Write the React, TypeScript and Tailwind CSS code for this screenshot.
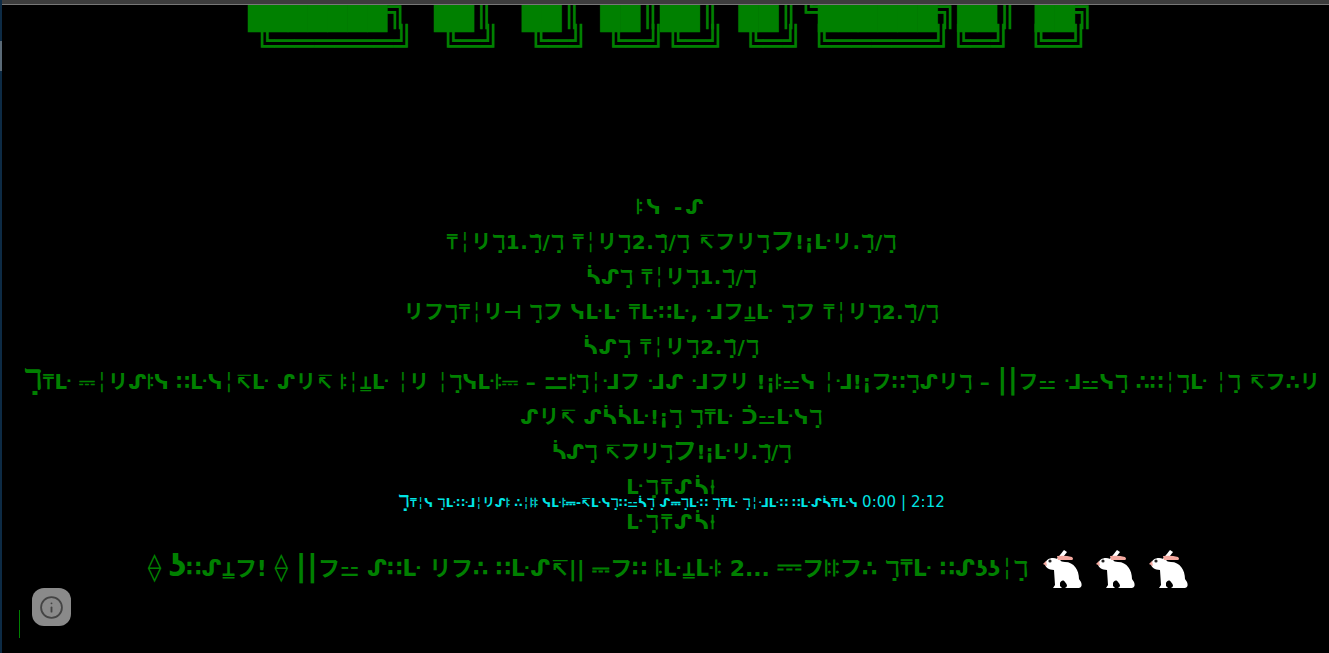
import { Info } from "lucide-react";
import type { ReactNode } from "react";

const font = { fontFamily: '"DejaVu Sans","Noto Sans CJK JP",monospace' };

function Rabbit() {
  return (
    <svg width="40" height="40" viewBox="0 0 40 40" className="shrink-0">
      <path d="M13 11 L21 1 L24 3 L17 12 Z" fill="#fff" />
      <path d="M10 9 C16 9 17 13 22 13 C31 13 36 21 36 30 L38 33 Q40 38 36 39 L22 39 Q26 37 22 33 C20 30 18 32 17 34 L17 37 L19 39 L10 39 L12 36 L11 21 C6 21 2 18 2 15 C3 11 6 9 10 9 Z" fill="#fff" />
      <path d="M14 7 Q22 6 29 8 Q31 10 29 11 Q20 11 15 11 Z" fill="#f4a9a0" />
      <path d="M0 15 L3 12 L4 17 Z" fill="#f4a9a0" />
      <circle cx="7" cy="12" r="1.6" fill="#222" />
    </svg>
  );
}

const C = ({ children }: { children: ReactNode }) => <span className="text-[1.4em] leading-none">{children}</span>;
const O = () => <span className="text-[1.2em] leading-none">フ</span>;
const B = ({ children }: { children: ReactNode }) => <span className="align-[-3px]">{children}</span>;
const D = () => <span className="text-[1.25em] leading-none">⟠</span>;

const txt = ".ℸ̣̇/ℸ̣";

const lines: { t: ReactNode; c: string }[] = [
  { t: "ꖎᓭ -ᔑ", c: "tracking-[3px]" },
  { t: <>⍑╎リℸ̣1{txt} ⍑╎リℸ̣2{txt} ↸フリℸ̣<O />!¡ᒷリ{txt}</>, c: "tracking-[0.5px]" },
  { t: <>ᓵᔑℸ̣ ⍑╎リℸ̣1{txt}</>, c: "tracking-[0.25px]" },
  { t: <>リフℸ̣⍑╎リ⊣ ℸ̣フ ᓭᒷᒷ ⍑ᒷ∷ᒷ, ᒲフ⍊ᒷ ℸ̣フ ⍑╎リℸ̣2{txt}</>, c: "tracking-[0.3px]" },
  { t: <>ᓵᔑℸ̣ ⍑╎リℸ̣2{txt}</>, c: "tracking-[0.7px]" },
  { t: <><C>ℸ̣</C>⍑ᒷ ⎓╎リᔑꖎᓭ ∷ᒷᓭ╎↸ᒷ ᔑリ↸ ꖎ╎⍊ᒷ ╎リ ╎ℸ̣ᓭᒷꖎ⎓ – <C>⚍</C>ꖎℸ̣╎ᒲフ ᒲᔑ ᒲフリ !¡ꖎ⚍ᓭ ╎ᒲ!¡フ∷ℸ̣ᔑリℸ̣ – <C>||</C>フ⚍ ᒲ⚍ᓭℸ̣ ∴∷╎ℸ̣ᒷ ╎ℸ̣ ↸フ∴リ</>, c: "tracking-[0.23px]" },
  { t: <>ᔑリ↸ ᔑᓵᓵᒷ<span>!¡</span><span>ℸ̣</span> ℸ̣⍑ᒷ ᑑ⚍ᒷᓭℸ̣</>, c: "tracking-[0.3px]" },
  { t: <>ᓵᔑℸ̣ ↸フリℸ̣<O />!¡ᒷリ{txt}</>, c: "tracking-[-0.4px]" },
  { t: "ᒷℸ̣⍑ᔑᓵ⍿", c: "tracking-[1.5px]" },
  { t: "ᒷℸ̣⍑ᔑᓵ⍿", c: "tracking-[1.5px]" },
];

export default function App() {
  return (
    <div className="relative h-[653px] w-[1329px] overflow-hidden bg-black text-[#008000]" style={font}>
      <div className="absolute left-[2px] right-0 top-0 z-10 h-[5px] border-b border-[#777] bg-[#3c3c3c]" />
      <div className="absolute left-0 top-0 h-full w-[2px] bg-[#0d2b45]" />
      <div className="absolute left-0 top-[41px] h-[30px] w-[2px] bg-[#5a6a77]" />
      <div className="pl-[14px] text-center">
        <div
          className="mt-[-7px] whitespace-pre text-[33px] leading-[33.5px]"
          style={{ fontFamily: '"DejaVu Sans Mono",monospace' }}
        >
          <div className="h-[33.5px]">
            <B>███████</B>╗<span className="ml-[27px]"><B>██</B>║</span><span className="ml-[28px]"><B>██</B>║</span>
            <span className="ml-[19px]"><B>██</B>║<B>██</B>║</span><span className="ml-[19px]"><B>██</B>║╚<B>██████</B>╗<B>██</B>║</span>
            <span className="ml-[18px]"><B>██</B>╗</span>
          </div>
          <div className="h-[33.5px]">
            ╚══════╝<span className="ml-[27px]">╚═╝</span><span className="ml-[28px]">╚═╝</span>
            <span className="ml-[18px]">╚═╝╚═╝</span><span className="ml-[18px]">╚═╝</span>
            <span className="ml-[9px]">╚═════╝╚═╝</span><span className="ml-[18px]">╚═╝</span>
          </div>
        </div>
        <div className="mt-[130px]">
          {lines.map((l, i) => (
            <div key={i} className={`h-[35px] whitespace-nowrap text-[20px] font-bold leading-[35px] ${l.c}`}>
              {l.t}
            </div>
          ))}
        </div>
        <div className="mt-[9px] flex items-center justify-center gap-[15px] pr-[6px] text-[22px] font-bold leading-[40px] tracking-[-0.08px]">
          <span className="whitespace-nowrap"><D /> <C>ʖ</C>∷ᔑ⍊フ! <D /> <C>||</C>フ⚍ ᔑ∷ᒷ リフ∴ ∷ᒷᔑ↸|| ⎓フ∷ ꖎᒷ⍊ᒷꖎ 2... <C>⎓</C>フꖎꖎフ∴ ℸ̣⍑ᒷ ∷ᔑʖʖ╎ℸ̣</span>
          <span className="flex gap-[13px]">
            <Rabbit />
            <Rabbit />
            <Rabbit />
          </span>
        </div>
      </div>
      <div className="absolute left-[14px] right-0 top-[490px] whitespace-nowrap text-center text-[12px] font-bold leading-[24px] tracking-[0.08px] text-[#00e5e5]">
        <C>ℸ̣</C>⍑╎ᓭ ℸ̣ᒷ∷ᒲ╎リᔑꖎ ∴╎ꖎꖎ ᓭᒷꖎ⎓-↸ᒷᓭℸ̣∷⚍ᓵℸ̣ ᔑ⎓ℸ̣ᒷ∷ ℸ̣⍑ᒷ ℸ̣╎ᒲᒷ∷ ∷ᒷᔑᓵ⍑ᒷᓭ <span className="text-[15px] font-normal">0:00 | 2:12</span>
      </div>
      <div className="absolute bottom-[15px] left-[19px] h-[28px] w-px bg-[#008000]" />
      <div className="absolute left-[32px] top-[588px] flex h-[38px] w-[39px] items-center justify-center rounded-[12px] bg-[#8a8a8a]">
        <Info size={25} strokeWidth={1.75} color="#444" />
      </div>
    </div>
  );
}
